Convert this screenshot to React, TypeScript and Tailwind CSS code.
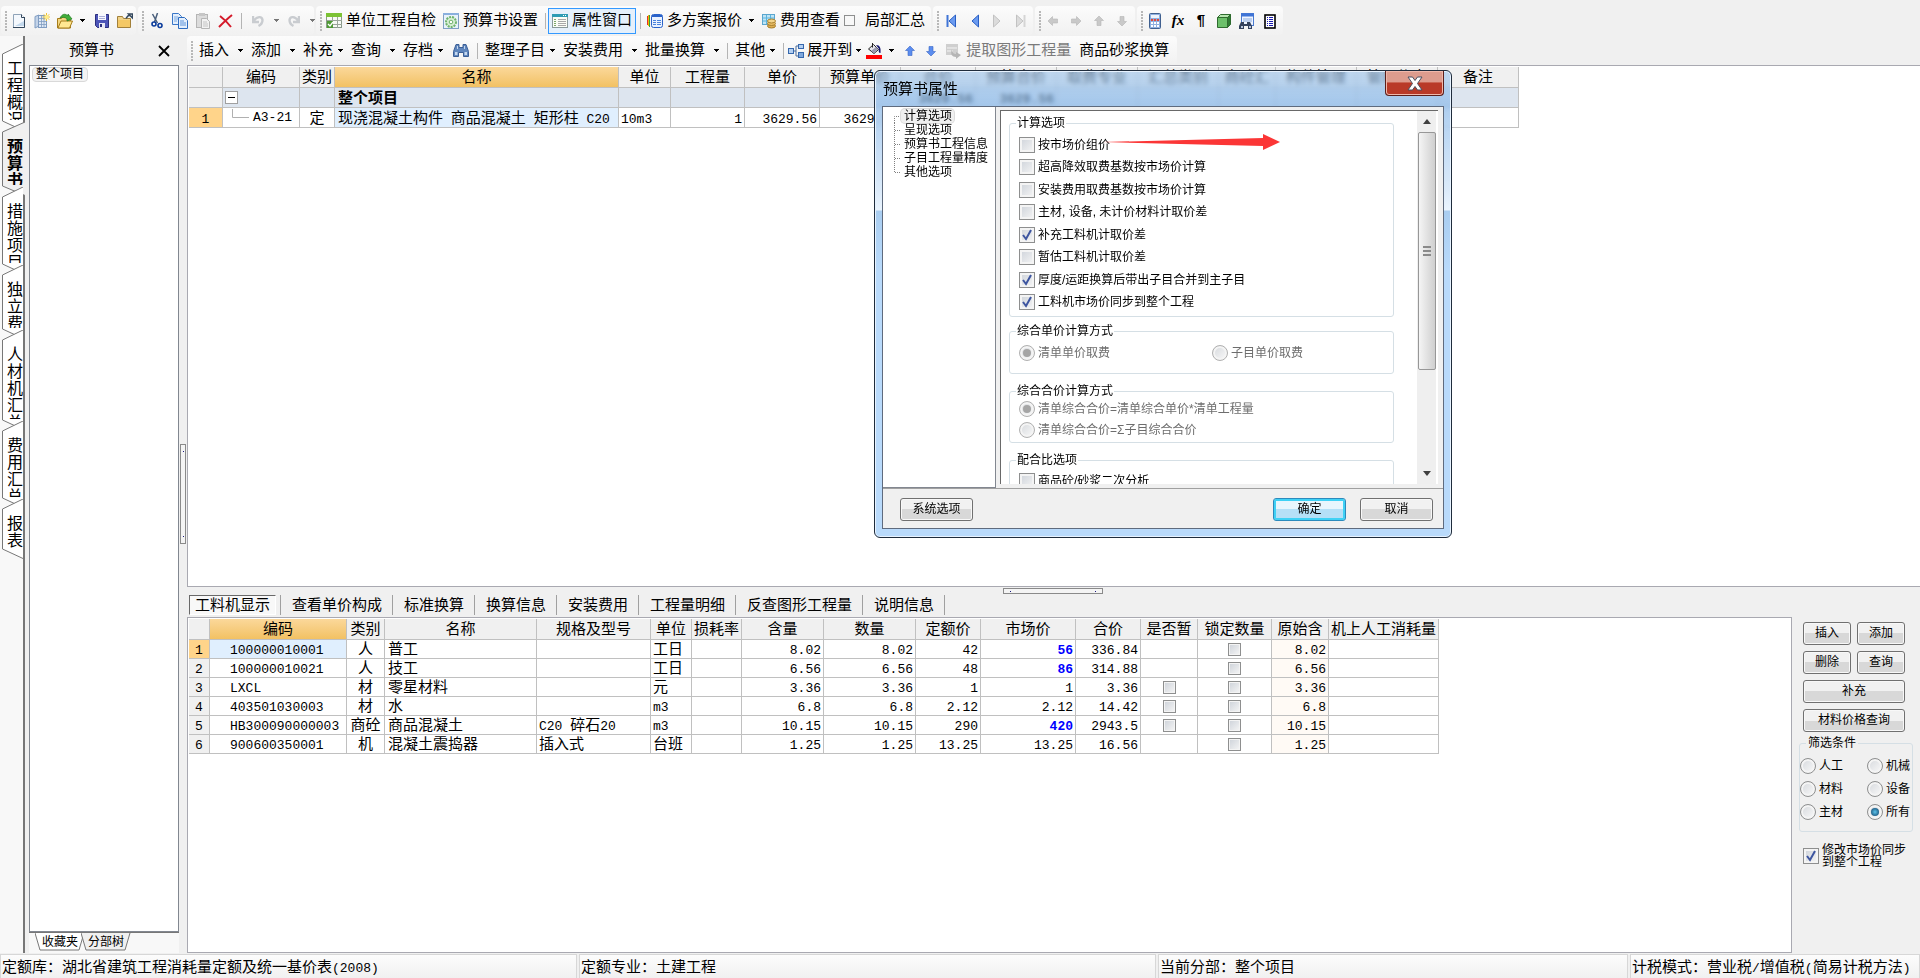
import React, { Fragment, ReactNode } from 'react';

const SANS = "font-['Liberation_Sans','Noto_Sans_CJK_SC',sans-serif]";

/* Chinese runs keep the surrounding size, Latin runs use the narrower monospace face */
function Mixed({ s }: { s: string }) {
  return (
    <>
      {s.split(/([\x20-\x7e]+)/).map((p, i) =>
        i % 2 ? (
          <span key={i} className="whitespace-pre font-['Liberation_Mono',monospace] text-[13px] leading-none">
            {p}
          </span>
        ) : (
          <Fragment key={i}>{p}</Fragment>
        ),
      )}
    </>
  );
}

function Svg({ children, w = 16, h = 16 }: { children: ReactNode; w?: number; h?: number }) {
  return (
    <svg width={w} height={h} viewBox={`0 0 ${w} ${h}`} fill="none" aria-hidden="true" className="shrink-0">
      {children}
    </svg>
  );
}

const Caret = ({ dim = false }: { dim?: boolean }) => (
  <Svg w={7} h={4}>
    <path d="M1 0h5v1h-1v1h-1v1h-1v-1h-1v-1h-1z" fill={dim ? '#777' : '#000'} />
  </Svg>
);

const Grip = () => (
  <Svg w={3} h={20}>
    {[0, 3, 6, 9, 12, 15, 18].map((y) => (
      <rect key={y} x="0" y={y} width="2" height="2" fill="#b8b8b8" />
    ))}
  </Svg>
);

const Sep = () => <span className="block h-4 w-px shrink-0 bg-[#b4b4b4]" />;

const NewDoc = () => (
  <Svg w={12}>
    <path d="M.5 1.5h8l3 3v10h-11z" fill="#f4f8fd" stroke="#8fa3b8" />
    <path d="M2 13h9V8z" fill="#c3d8ec" />
    <path d="M8.5 1.5v3h3" fill="#fff" stroke="#33475c" />
    <path d="M11.5 4v10.500H0" stroke="#33475c" />
  </Svg>
);
const NewGrid = () => (
  <Svg>
    <path d="M1 3.500l4-1.500v11l-4 2z" fill="#c3d3e8" stroke="#7f9cc2" />
    <rect x="4.500" y="2.500" width="8" height="12" fill="#dfe9f6" stroke="#7f9cc2" />
    <path d="M5 5.500h7M5 8.500h7M5 11.500h7M7.500 3v11M10 3v11" stroke="#7f9cc2" strokeWidth=".8" />
    <path d="M12.500 0v8M8.500 4h7.500M9.800 1.300l5.400 5.400M15.200 1.300l-5.400 5.400" stroke="#f2c230" />
    <circle cx="12.500" cy="4" r="2" fill="#ffee8a" />
  </Svg>
);
const OpenFolder = () => (
  <Svg>
    <path d="M.5 5.500h4l1-1.500h5v3h3v8H.5z" fill="#f3d680" stroke="#a67c1a" />
    <path d="M1 15l3-7h11.500l-3 7z" fill="#ffe892" stroke="#a67c1a" />
    <path d="M3 5C5 1 8 0 11 3V1l4 5-5 2V6C8 4 6 4 3 5z" fill="#3fae3a" stroke="#1e7a1c" strokeWidth=".7" />
  </Svg>
);
const Save = () => (
  <Svg w={14}>
    <path d="M.5 1.500h13v13h-11l-2-2z" fill="#4d55b8" stroke="#2b2f7e" />
    <rect x="3" y="1" width="8" height="6" fill="#f7f8ff" />
    <path d="M4 3.500h6M4 5.500h6" stroke="#a9aed8" />
    <rect x="4" y="10" width="6" height="5" fill="#e8e9f5" />
    <rect x="5" y="11" width="2" height="3" fill="#2b2f7e" />
  </Svg>
);
const FolderOut = () => (
  <Svg>
    <path d="M.5 3.500h5l1 2h7v9H.5z" fill="#f0d38a" stroke="#a2803a" />
    <path d="M1 7h12v7H1z" fill="#f4c865" />
    <path d="M9 5.500c1-2 2-3 4-3.500M11.500 1h4v4z" stroke="#33475c" strokeWidth="1.500" />
  </Svg>
);
const Cut = () => (
  <Svg>
    <path d="M3.500 1l5 9M8.500 0L5.500 9" stroke="#4a5f7c" strokeWidth="1.500" />
    <circle cx="5" cy="11" r="2" stroke="#0b3c9c" strokeWidth="1.600" />
    <circle cx="11" cy="12.500" r="2" stroke="#0b3c9c" strokeWidth="1.600" />
  </Svg>
);
const Copy = () => (
  <Svg>
    <path d="M.5 .5h6l3 3v8h-9z" fill="#e4effc" stroke="#3a77c8" />
    <path d="M2 4h4M2 6h5M2 8h3" stroke="#7ba9e3" />
    <path d="M6.500 4.500h6l3 3v8h-9z" fill="#e4effc" stroke="#2e6cc0" />
    <path d="M8 8h4M8 10h6M8 12h6" stroke="#5f94da" />
  </Svg>
);
const Paste = () => (
  <Svg>
    <rect x="1.500" y="1.500" width="11" height="13" fill="#dcdcdc" stroke="#b5b5b5" />
    <rect x="4" y="0" width="6" height="3" fill="#c6c6c6" />
    <path d="M6.500 5.500h5l3 3v7h-8z" fill="#f2f2f2" stroke="#b5b5b5" />
    <path d="M8 9h4M8 11h5M8 13h5" stroke="#c4c4c4" />
  </Svg>
);
const Cross = () => (
  <Svg>
    <path d="M2 3c4 3 8 7 11 11M14 2C9 6 5 10 1 14" stroke="#d41a2a" strokeWidth="2" />
  </Svg>
);
const Undo = () => (
  <Svg w={12}>
    <path d="M1 3v6h6M1.500 8C5 3 10 3 10.500 7c0 3-2 5-4 6" stroke="#c9ccd0" strokeWidth="2.400" />
  </Svg>
);
const Redo = () => (
  <Svg w={12}>
    <path d="M11 3v6H5M10.500 8C7 3 2 3 1.500 7c0 3 2 5 4 6" stroke="#c9ccd0" strokeWidth="2.400" />
  </Svg>
);
const SheetGreen = () => (
  <Svg>
    <rect x=".5" y=".5" width="15" height="14" fill="#f7f9f5" stroke="#8a9a8a" />
    <rect x="0" y="0" width="16" height="4" fill="#7cc234" />
    <path d="M6.500 4v11M11.500 4v11M1 7.500h15M7 11.500h9" stroke="#9aa59a" />
    <rect x="1" y="8" width="6" height="7" fill="#4f9a35" />
    <path d="M2 11l2 2 3-4" stroke="#fff" strokeWidth="1.300" />
  </Svg>
);
const Gear = () => (
  <Svg>
    <rect x=".5" y=".5" width="15" height="15" fill="#e8f2fb" stroke="#7f9fc4" />
    <path d="M0 1h16" stroke="#8ab0de" strokeWidth="2" />
    <circle cx="8" cy="9" r="5" stroke="#6fb36c" strokeWidth="2" strokeDasharray="2 1" fill="#d8efd5" />
    <circle cx="8" cy="9" r="1.800" fill="#fff" stroke="#6fb36c" />
  </Svg>
);
const WindowList = () => (
  <Svg>
    <rect x=".5" y="1.500" width="15" height="13" fill="#fbfdf6" stroke="#8a9a9a" />
    <rect x="0" y="1" width="16" height="3" fill="#2d9cb4" />
    <path d="M11 2.500h1M13 2.500h1" stroke="#fff" />
    <path d="M2 6.500h2M2 8.500h2M2 10.500h2M2 12.500h2" stroke="#7fa86a" />
    <path d="M6 6.500h8M6 8.500h8M6 10.500h8M6 12.500h8" stroke="#a8a8a8" />
  </Svg>
);
const Sheets = () => (
  <Svg>
    <path d="M.5 3v9" stroke="#e2332a" />
    <path d="M1.500 2v11" stroke="#f5b400" />
    <path d="M2.500 2v12" stroke="#2fa53b" />
    <rect x="4.500" y="1.500" width="11" height="13" rx="2" fill="#eaf2ff" stroke="#2a62c9" />
    <path d="M5 3h10" stroke="#2a62c9" strokeWidth="2" />
    <path d="M6 7.500h3M10 7.500h4M6 9.500h3M10 9.500h4M6 11.500h3M10 11.500h4" stroke="#4b82dc" />
  </Svg>
);
const Coins = () => (
  <Svg w={14}>
    <rect x=".5" y="1.500" width="12" height="10" fill="#bfe4f5" stroke="#5aa6cf" />
    <path d="M1 5h11M1 8h11M4.500 2v9M8.500 2v9" stroke="#5ab4de" />
    <ellipse cx="9.500" cy="13" rx="4" ry="2" fill="#dcae52" stroke="#a87f2c" />
    <ellipse cx="9.500" cy="10.500" rx="4" ry="2" fill="#e9bd65" stroke="#a87f2c" />
    <ellipse cx="9.500" cy="8" rx="4" ry="2" fill="#f3d58c" stroke="#a87f2c" />
  </Svg>
);
const Binoculars = () => (
  <Svg>
    <path d="M3 1.500h3v3h4v-3h3l2.500 7v5h-5v-4h-5v4h-5v-5z" fill="#5f86bd" stroke="#3b5f97" />
    <path d="M2 9h2.500v3H2zM11.500 9H14v3h-2.500zM4 3h1v3H4zM11 3h1v3h-1z" fill="#c4d7ef" />
  </Svg>
);
const TreeIcon = () => (
  <Svg>
    <path d="M5 8h3M8 3v10M8 3h3M8 13h3" stroke="#4a6d9c" />
    <rect x=".5" y="5.500" width="5" height="5" fill="#b5d0f1" stroke="#3567ad" />
    <rect x="10.500" y="1.500" width="5" height="4" fill="#b5d0f1" stroke="#3567ad" />
    <rect x="10.500" y="9.500" width="5" height="5" fill="#7fa8dd" stroke="#3567ad" />
  </Svg>
);
const Bucket = () => (
  <Svg>
    <path d="M2.500 6l5-4.500 5 5-4.500 4z" fill="#e6e6ec" stroke="#222" />
    <path d="M5 8l5-4 2 2-4 4z" fill="#9a9ab0" />
    <path d="M6.500 0v4.500" stroke="#222" />
    <path d="M10 2c4 0 5 3 4.500 8-2 0-2-2-1.500-4z" fill="#15156e" />
    <rect x="0" y="12" width="16" height="4" fill="#f00" />
  </Svg>
);
const Extract = () => (
  <Svg>
    <rect x="0" y="1" width="12" height="11" fill="#cfcfcf" />
    <path d="M1 5h10M1 8h6" stroke="#f4f4f4" />
    <path d="M6 6c0 4 2 5 4 5V9l5 3-5 4v-2c-4 0-6-3-4-8z" fill="#b5b5b5" />
  </Svg>
);
const BlockArrow = ({ dir, color = '#c9c9c9' }: { dir: number; color?: string }) => (
  <Svg w={10} h={10}>
    <path
      d="M5 0l4.500 4.500H7V9.500H3V4.500H.5z"
      fill={color}
      stroke={color === '#c9c9c9' ? '#b5b5b5' : '#3a66c4'}
      strokeWidth=".6"
      transform={`rotate(${dir} 5 5)`}
    />
  </Svg>
);
const Nav = ({ flip = false, bar = false, dim = false }: { flip?: boolean; bar?: boolean; dim?: boolean }) => (
  <Svg w={11} h={14}>
    <g transform={flip ? 'translate(11 0) scale(-1 1)' : undefined}>
      {bar && <rect x=".5" y="1" width="2" height="12" fill={dim ? '#d5d5d5' : '#3f74d6'} />}
      <path d="M9.500 1v12L3 7z" fill={dim ? '#dcdcdc' : '#6b9bf0'} stroke={dim ? '#c2c2c2' : '#2a5fc4'} />
    </g>
  </Svg>
);
const Calc = () => (
  <Svg w={12}>
    <rect x=".5" y=".5" width="11" height="15" rx="1" fill="#8fb0e0" stroke="#40608f" />
    <rect x="2" y="2" width="8" height="3" fill="#eef4fc" />
    {[7, 10, 13].map((y) => [2, 5, 8].map((x) => <rect key={`${x}-${y}`} x={x} y={y - 1} width="2" height="2" fill={y === 7 ? '#e0483a' : '#fff'} />))}
  </Svg>
);
const Cube = () => (
  <Svg w={14}>
    <path d="M.5 4.500l3-3h10l-3 3z" fill="#b5e6ae" stroke="#2f6b2f" />
    <path d="M10.500 4.500l3-3v10l-3 3z" fill="#2e7d32" stroke="#2f6b2f" />
    <path d="M.5 4.500h10v10H.5z" fill="#6cc06a" stroke="#2f6b2f" />
  </Svg>
);
const FindSheet = () => (
  <Svg>
    <rect x="2.500" y=".5" width="12" height="12" fill="#eef4ff" stroke="#4a7bd0" />
    <path d="M2 2h13" stroke="#3f74d6" strokeWidth="3" />
    <path d="M4 6h9M4 8h9" stroke="#8aabdf" />
    <path d="M2 9h3v2h3V9h3l2 4v3H9v-3H5v3H0v-3z" fill="#33415c" />
    <path d="M2 13h2v2H2zM10 13h2v2h-2z" fill="#b9c8e0" />
  </Svg>
);
const ListIcon = () => (
  <Svg w={12}>
    <rect x="1" y="2" width="10" height="13" fill="#fff" stroke="#000" strokeWidth="1.600" />
    <path d="M3 4.500h1M5 4.500h4M3 6.500h1M5 6.500h4M3 8.500h1M5 8.500h4M3 10.500h1M5 10.500h4M3 12.500h1M5 12.500h4" stroke="#1a1ab0" />
  </Svg>
);

function Group({ children, className = '' }: { children: ReactNode; className?: string }) {
  return (
    <div className={`flex h-[29px] shrink-0 items-center rounded-sm bg-linear-to-b from-[#fcfcfc] to-[#f1f1f1] pl-1 ${className}`}>
      <Grip />
      {children}
    </div>
  );
}

function Ico({ label, children, className = 'w-6' }: { label: string; children: ReactNode; className?: string }) {
  return (
    <button type="button" aria-label={label} className={`flex h-6 shrink-0 items-center justify-center ${className}`}>
      {children}
    </button>
  );
}

function Drop({ label, tight = false }: { label: string; tight?: boolean }) {
  return (
    <button type="button" className="flex shrink-0 items-center pr-[7px]">
      {label}
      <span className={tight ? 'ml-1' : 'ml-2'}>
        <Caret />
      </span>
    </button>
  );
}

function TopBar() {
  return (
    <header className="flex h-9 items-start gap-0.5 pt-1.5 pl-px text-[15px]">
      <Group className="w-[135px]">
        <Ico label="新建" className="w-[22px]"><NewDoc /></Ico>
        <Ico label="新建表"><NewGrid /></Ico>
        <Ico label="打开" className="w-[22px]"><OpenFolder /></Ico>
        <Ico label="打开列表" className="w-3"><Caret /></Ico>
        <Ico label="保存" className="w-7"><Save /></Ico>
        <Ico label="关闭工程" className="w-[18px]"><FolderOut /></Ico>
      </Group>
      <Group className="w-[176px]">
        <Ico label="剪切"><Cut /></Ico>
        <Ico label="复制" className="w-[22px]"><Copy /></Ico>
        <Ico label="粘贴"><Paste /></Ico>
        <Ico label="删除" className="w-[22px]"><Cross /></Ico>
        <span className="px-1"><Sep /></span>
        <Ico label="撤销"><Undo /></Ico>
        <Ico label="撤销列表" className="w-3"><Caret dim /></Ico>
        <Ico label="重做"><Redo /></Ico>
        <Ico label="重做列表" className="w-3"><Caret dim /></Ico>
      </Group>
      <Group className="w-[615px]">
        <button type="button" className="ml-[3px] flex shrink-0 items-center gap-1 whitespace-nowrap"><SheetGreen />单位工程自检</button>
        <button type="button" className="ml-[7px] flex shrink-0 items-center gap-1 whitespace-nowrap"><Gear />预算书设置</button>
        <span className="ml-[7px]"><Sep /></span>
        <button type="button" className="ml-0.5 flex h-[26px] shrink-0 items-center gap-1 border border-[#3399ff] bg-[#e5f0fb] px-[3px] whitespace-nowrap"><WindowList />属性窗口</button>
        <span className="ml-1"><Sep /></span>
        <button type="button" className="ml-1.5 flex shrink-0 items-center gap-1 whitespace-nowrap"><Sheets />多方案报价<span className="ml-0.5"><Caret /></span></button>
        <button type="button" className="ml-[7px] flex shrink-0 items-center gap-1 whitespace-nowrap"><Coins />费用查看</button>
        <label className="ml-1 flex shrink-0 items-center gap-2.5 whitespace-nowrap">
          <input type="checkbox" className="h-[11px] w-[11px] appearance-none border border-[#8e8f8f] bg-[#f8f8f8]" />
          局部汇总
        </label>
      </Group>
      <Group className="w-[100px]">
        <div className="flex gap-3 pl-1.5">
          <button type="button" aria-label="首条"><Nav bar /></button>
          <button type="button" aria-label="上一条"><Nav /></button>
          <button type="button" aria-label="下一条"><Nav flip dim /></button>
          <button type="button" aria-label="末条"><Nav flip bar dim /></button>
        </div>
      </Group>
      <Group className="w-[100px]">
        <div className="flex gap-[13px] pl-1.5">
          <button type="button" aria-label="左移"><BlockArrow dir={-90} /></button>
          <button type="button" aria-label="右移"><BlockArrow dir={90} /></button>
          <button type="button" aria-label="上移"><BlockArrow dir={0} /></button>
          <button type="button" aria-label="下移"><BlockArrow dir={180} /></button>
        </div>
      </Group>
      <Group className="w-[146px]">
        <Ico label="计算器" className="w-[22px]"><Calc /></Ico>
        <Ico label="函数"><i className="font-['Liberation_Serif',serif] text-[15px] font-bold">fx</i></Ico>
        <Ico label="段落" className="w-[22px]"><span className="font-['Liberation_Sans',sans-serif] text-[15px] font-bold">¶</span></Ico>
        <Ico label="三维"><Cube /></Ico>
        <Ico label="查找表" className="w-[22px]"><FindSheet /></Ico>
        <Ico label="清单"><ListIcon /></Ico>
      </Group>
    </header>
  );
}

function EditBar() {
  return (
    <div className="flex h-[29px] shrink-0 items-start">
      <Group className="text-[15px] whitespace-nowrap">
        <span className="w-[5px]" />
        <Drop label="插入" />
        <Drop label="添加" />
        <Drop label="补充" tight />
        <Drop label="查询" />
        <Drop label="存档" tight />
        <Ico label="查找" className="w-5"><Binoculars /></Ico>
        <span className="pr-[7px] pl-1.5"><Sep /></span>
        <Drop label="整理子目" tight />
        <Drop label="安装费用" />
        <Drop label="批量换算" />
        <span className="pr-[7px]"><Sep /></span>
        <Drop label="其他" tight />
        <span className="pr-1"><Sep /></span>
        <button type="button" className="flex items-center gap-[3px] pr-1"><TreeIcon />展开到<Caret /></button>
        <Ico label="填充颜色" className="w-4"><Bucket /></Ico>
        <Ico label="颜色列表" className="w-[18px]"><Caret /></Ico>
        <Ico label="上移" className="w-5"><BlockArrow dir={0} color="#5b8def" /></Ico>
        <Ico label="下移" className="w-[22px]"><BlockArrow dir={180} color="#5b8def" /></Ico>
        <button type="button" className="ml-1 flex items-center gap-1 text-[#7a7a7a]"><Extract />提取图形工程量</button>
        <button type="button" className="px-2">商品砂浆换算</button>
      </Group>
    </div>
  );
}

const TABS: { name: string; h: number; on?: boolean }[] = [
  { name: '工程概况', h: 67 },
  { name: '预算书', h: 54, on: true },
  { name: '措施项目', h: 67 },
  { name: '独立费', h: 54 },
  { name: '人材机汇总', h: 80 },
  { name: '费用汇总', h: 67 },
  { name: '报表', h: 40 },
];

function SideTabs() {
  return (
    <nav className="flex w-[25px] shrink-0 flex-col gap-[11px] border-r-2 border-[#777] bg-[#f8f8f8] pt-[18px]">
      {TABS.map((t) => (
        <button key={t.name} type="button" className="relative w-full shrink-0 pt-[5px] pl-[7px]" style={{ height: t.h }}>
          <svg width={t.on ? 25 : 23} height={t.h + 20} className="absolute top-[-10px] left-0" aria-hidden="true">
            <path
              d={`M${t.on ? 25 : 23} 0L2.500 10V${t.h + 10}L${t.on ? 25 : 23} ${t.h + 19.5}`}
              fill={t.on ? '#f0f0f0' : '#fff'}
              stroke="#777"
            />
          </svg>
          <span
            className={`relative block overflow-hidden text-left text-[16px] leading-[17px] ${t.on ? 'font-bold' : ''}`}
            style={{ maxHeight: t.h - 7 }}
          >
            {t.name.split('').map((c, i) => (
              <span key={i} className="block">{c}</span>
            ))}
          </span>
        </button>
      ))}
    </nav>
  );
}

function ProjectPanel() {
  return (
    <aside className="flex w-[150px] shrink-0 flex-col">
      <div className="flex h-[29px] items-center justify-between pr-[9px] pl-10 text-[15px]">
        预算书
        <button type="button" aria-label="关闭面板">
          <Svg w={12} h={12}>
            <path d="M1 1l10 10M11 1L1 11" stroke="#000" strokeWidth="1.800" />
          </Svg>
        </button>
      </div>
      <div className="flex flex-1 items-start border border-[#828790] bg-white p-px pl-0.5">
        <a href="#project" className="rounded-sm border border-[#d9d9d9] bg-[#f3f3f3] px-[3px] text-[12px] leading-[13px]">
          整个项目
        </a>
      </div>
      <div className="flex h-[21px] border-t border-[#777] bg-[#f8f8f8] pl-2 text-[12px] leading-[17px]">
        {['收藏夹', '分部树'].map((t, i) => (
          <button key={t} type="button" className="relative h-[18px] w-[46px] text-center">
            <svg width="50" height="18" className="absolute top-0 left-[-2px]" aria-hidden="true">
              <path d="M0 0L5 17H44L49 0" fill={i ? '#f0f0f0' : '#fff'} stroke="#777" />
            </svg>
            <span className="relative">{t}</span>
          </button>
        ))}
      </div>
    </aside>
  );
}

const CELL = 'overflow-hidden border-r border-b border-[#c0c0c0] whitespace-nowrap';

const TOP_COLS: [string, number][] = [
  ['', 34], ['编码', 77], ['类别', 35], ['名称', 284], ['单位', 52], ['工程量', 74], ['单价', 75], ['预算单价', 81],
  ['合价', 75], ['预算合价', 81], ['取费专业', 81], ['汇总类别', 81], ['商砼汇', 57], ['构件管理', 81], ['管理信息', 81], ['备注', 81],
];

function Cols({ cols }: { cols: [string, number][] }) {
  return (
    <colgroup>
      {cols.map((c, i) => (
        <col key={i} style={{ width: c[1] }} />
      ))}
    </colgroup>
  );
}

const total = (cols: [string, number][]) => cols.reduce((a, c) => a + c[1], 0);

function ItemTable() {
  return (
    <table className="table-fixed border-separate border-spacing-0 text-[15px] leading-4" style={{ width: total(TOP_COLS) }}>
      <Cols cols={TOP_COLS} />
      <thead>
        <tr className="h-[21px]">
          {TOP_COLS.map((c, i) => (
            <th key={i} className={`${CELL} p-0 text-center font-normal ${i === 3 ? 'bg-linear-to-b from-[#fbd89a] to-[#f2c162]' : 'bg-[#f0f0f0]'}`}>
              {c[0]}
            </th>
          ))}
        </tr>
      </thead>
      <tbody>
        <tr className="h-5 bg-[#dde5ef]">
          {TOP_COLS.map((_, i) => (
            <td key={i} className={`${CELL} p-0 ${i === 0 ? 'bg-[#f0f0f0]' : ''} ${i === 3 ? 'pl-[3px] font-bold' : ''} ${i === 8 || i === 9 ? 'pr-0.5 text-right font-bold' : ''}`}>
              {i === 1 && (
                <span className="ml-0.5 flex h-[13px] w-[13px] items-center justify-center border border-[#a0a0a0] bg-white">
                  <span className="h-px w-[7px] bg-black" />
                </span>
              )}
              {i === 3 && '整个项目'}
              {(i === 8 || i === 9) && <Mixed s="3629.56" />}
            </td>
          ))}
        </tr>
        <tr className="h-5 bg-white">
          {['1', 'A3-21', '定', '现浇混凝土构件 商品混凝土 矩形柱 C20', '10m3', '1', '3629.56', '3629.56', '', '', '', '', '', '', '', ''].map((v, i) => (
            <td
              key={i}
              className={`${CELL} p-0 ${i === 0 ? 'bg-[#ffd48a] text-center' : ''} ${i === 1 ? 'pr-[7px] text-right' : ''} ${i === 2 ? 'text-center' : ''} ${i === 3 ? 'bg-[#e0effe] pl-[3px]' : ''} ${i === 4 ? 'pl-0.5' : ''} ${i > 4 ? 'pr-0.5 text-right' : ''}`}
            >
              {i === 1 ? (
                <span className="flex items-center justify-end gap-1">
                  <Svg w={17} h={18}>
                    <path d="M.5 0V8.500H17" stroke="#b0b0b0" />
                  </Svg>
                  <Mixed s={v} />
                </span>
              ) : (
                <Mixed s={v} />
              )}
            </td>
          ))}
        </tr>
      </tbody>
    </table>
  );
}

const LOW_COLS: [string, number][] = [
  ['', 21], ['编码', 137], ['类别', 38], ['名称', 152], ['规格及型号', 114], ['单位', 41], ['损耗率', 50], ['含量', 82], ['数量', 92],
  ['定额价', 65], ['市场价', 95], ['合价', 65], ['是否暂', 57], ['锁定数量', 74], ['原始含', 57], ['机上人工消耗量', 110],
];

const ROWS: string[][] = [
  ['100000010001', '人', '普工', '', '工日', '', '8.02', '8.02', '42', '56', '336.84', '', '8.02'],
  ['100000010021', '人', '技工', '', '工日', '', '6.56', '6.56', '48', '86', '314.88', '', '6.56'],
  ['LXCL', '材', '零星材料', '', '元', '', '3.36', '3.36', '1', '1', '3.36', 'y', '3.36'],
  ['403501030003', '材', '水', '', 'm3', '', '6.8', '6.8', '2.12', '2.12', '14.42', 'y', '6.8'],
  ['HB300090000003', '商砼', '商品混凝土', 'C20 碎石20', 'm3', '', '10.15', '10.15', '290', '420', '2943.5', 'y', '10.15'],
  ['900600350001', '机', '混凝土震捣器', '插入式', '台班', '', '1.25', '1.25', '13.25', '13.25', '16.56', '', '1.25'],
];

const MiniBox = ({ label }: { label: string }) => (
  <input
    type="checkbox"
    aria-label={label}
    className="mx-auto block h-[13px] w-[13px] appearance-none border border-[#8e8f8f] bg-linear-to-br from-[#cdd2d9] to-[#f6f6f6] shadow-[inset_0_0_0_1px_#f4f4f4]"
  />
);

function ResourceTable() {
  return (
    <table className="table-fixed border-separate border-spacing-0 text-[15px] leading-4" style={{ width: total(LOW_COLS) }}>
      <Cols cols={LOW_COLS} />
      <thead>
        <tr className="h-[21px]">
          {LOW_COLS.map((c, i) => (
            <th key={i} className={`${CELL} p-0 text-center font-normal ${i === 1 ? 'bg-linear-to-b from-[#fbd89a] to-[#f2c162]' : 'bg-[#f0f0f0]'}`}>
              {c[0]}
            </th>
          ))}
        </tr>
      </thead>
      <tbody>
        {ROWS.map((r, n) => {
          const num = `${CELL} p-0 pr-0.5 text-right`;
          const hot = /^(56|86|420)$/.test(r[9]);
          return (
            <tr key={n} className="h-[19px]">
              <td className={`${CELL} p-0 text-center ${n === 0 ? 'bg-[#ffd48a]' : 'bg-[#f0f0f0]'}`}><Mixed s={String(n + 1)} /></td>
              <td className={`${CELL} p-0 pl-5 ${n === 0 ? 'bg-[#e0effe]' : ''}`}><Mixed s={r[0]} /></td>
              <td className={`${CELL} p-0 text-center`}>{r[1]}</td>
              <td className={`${CELL} p-0 pl-[3px]`}>{r[2]}</td>
              <td className={`${CELL} p-0 pl-0.5`}><Mixed s={r[3]} /></td>
              <td className={`${CELL} p-0 pl-0.5`}><Mixed s={r[4]} /></td>
              <td className={num} />
              <td className={num}><Mixed s={r[6]} /></td>
              <td className={num}><Mixed s={r[7]} /></td>
              <td className={num}><Mixed s={r[8]} /></td>
              <td className={`${num} ${hot ? 'font-bold text-[#0000ff]' : ''}`}><Mixed s={r[9]} /></td>
              <td className={num}><Mixed s={r[10]} /></td>
              <td className={`${CELL} p-0`}>{r[11] && <MiniBox label={`是否暂 ${n + 1}`} />}</td>
              <td className={`${CELL} p-0`}><MiniBox label={`锁定数量 ${n + 1}`} /></td>
              <td className={`${num} bg-[#fffaf5]`}><Mixed s={r[12]} /></td>
              <td className={num} />
            </tr>
          );
        })}
      </tbody>
    </table>
  );
}

function Check({ children, checked = false }: { children: ReactNode; checked?: boolean }) {
  return (
    <label className="flex min-h-4 items-center gap-[3px] text-[12px] leading-3 whitespace-nowrap">
      <span className="relative h-4 w-4 shrink-0">
        <input
          type="checkbox"
          defaultChecked={checked}
          className="peer block h-4 w-4 appearance-none border border-[#8e8f8f] bg-linear-to-br from-[#cdd2d9] to-[#f6f6f6] shadow-[inset_0_0_0_2px_#f4f4f4]"
        />
        <svg width="16" height="16" aria-hidden="true" className="pointer-events-none absolute inset-0 hidden peer-checked:block">
          <path d="M4 8l3 4 5-9" fill="none" stroke="#3d55a0" strokeWidth="2" />
        </svg>
      </span>
      <span>{children}</span>
    </label>
  );
}

function Radio({ children, name, checked = false, disabled = false }: { children: ReactNode; name: string; checked?: boolean; disabled?: boolean }) {
  return (
    <label className={`flex h-4 items-center gap-[3px] text-[12px] leading-3 whitespace-nowrap ${disabled ? 'text-[#6d6d6d]' : ''}`}>
      <span className="relative h-4 w-4 shrink-0">
        <input
          type="radio"
          name={name}
          defaultChecked={checked}
          disabled={disabled}
          className="peer block h-4 w-4 appearance-none rounded-full border border-[#8e8f8f] bg-linear-to-br from-[#d5d8dc] to-[#fafafa] shadow-[inset_0_0_0_2px_#f4f4f4] disabled:border-[#b0b0b0]"
        />
        <span
          className={`pointer-events-none absolute inset-1 hidden rounded-full peer-checked:block ${disabled ? 'bg-[#a5a5a5]' : 'bg-radial from-[#5cc4ec] to-[#0d3f66]'}`}
        />
      </span>
      {children}
    </label>
  );
}

function Btn({ children, className = '', primary = false }: { children: ReactNode; className?: string; primary?: boolean }) {
  return (
    <button
      type="button"
      className={`h-[23px] rounded-[3px] border text-[12px] leading-[21px] ${
        primary
          ? 'border-[#2c8bbd] bg-linear-to-b from-[#e8f6fd] from-50% to-[#b5e0f7] to-50% shadow-[inset_0_0_0_2px_#3fd1f5]'
          : 'border-[#707070] bg-linear-to-b from-[#f1f1f1] from-50% to-[#d8d8d8] to-50% shadow-[inset_0_0_0_1px_#f8f8f8]'
      } ${className}`}
    >
      {children}
    </button>
  );
}

function SidePanel() {
  return (
    <aside className="w-32 shrink-0 px-[7px] pt-[5px]">
      <div className="flex flex-col gap-1.5 px-1 pr-2">
        <div className="flex gap-1.5">
          <Btn className="flex-1">插入</Btn>
          <Btn className="flex-1">添加</Btn>
        </div>
        <div className="flex gap-1.5">
          <Btn className="flex-1">删除</Btn>
          <Btn className="flex-1">查询</Btn>
        </div>
        <Btn>补充</Btn>
        <Btn>材料价格查询</Btn>
      </div>
      <fieldset className="mt-[5px] h-[95px] rounded-[3px] border border-[#d5dfe5]">
        <legend className="ml-1.5 px-0.5 text-[12px] leading-3">筛选条件</legend>
        <div className="grid grid-cols-[67px_auto] gap-y-[7px] pt-[9px]">
          <Radio name="kind">人工</Radio>
          <Radio name="kind">机械</Radio>
          <Radio name="kind">材料</Radio>
          <Radio name="kind">设备</Radio>
          <Radio name="kind">主材</Radio>
          <Radio name="kind" checked>所有</Radio>
        </div>
      </fieldset>
      <div className="mt-3 pl-1">
        <Check checked>
          修改市场价同步
          <br />
          到整个工程
        </Check>
      </div>
    </aside>
  );
}

const Handle = ({ vertical = false }: { vertical?: boolean }) => (
  <span
    className={`flex items-center justify-between border border-[#8a8a8a] bg-[#f4f4f4] ${vertical ? 'h-[100px] w-1.5 flex-col py-1.5' : 'h-1.5 w-[100px] px-1.5'}`}
  >
    <span className="h-px w-px bg-[#1a1a80]" />
    <span className="h-px w-px bg-[#1a1a80]" />
  </span>
);

const FS = 'rounded-[3px] border border-[#d5dfe5] pl-[9px]';
const LG = 'ml-[-3px] px-px text-[12px] leading-3';

function Dialog() {
  return (
    <section
      role="dialog"
      aria-label="预算书属性"
      className="absolute top-[70px] left-[874px] flex h-[468px] w-[578px] flex-col rounded-[6px] border border-[#1f2c3c] bg-[linear-gradient(180deg,rgba(160,198,236,0.62)_0px,rgba(140,186,234,0.7)_36px,#dcebfa_120px,#eaf4fe_139px,#a9cdf0_140px,#b9dafb_200px,#b9dafb_100%)] px-[7px] pb-2 shadow-[inset_0_0_0_1px_#e8f3ff] backdrop-blur-[2px]"
    >
      <div className="flex h-[35px] shrink-0 items-start justify-between">
        <h2 className="pt-2 pl-px text-[15px] leading-5">预算书属性</h2>
        <button
          type="button"
          aria-label="关闭"
          className="flex h-[25px] w-[59px] items-center justify-center rounded-b-[4px] border border-t-0 border-[#5c1f1a] bg-linear-to-b from-[#dd9c8e] from-45% to-[#b93a28] to-50% shadow-[inset_0_0_0_1px_#f0b8ab]"
        >
          <Svg w={16} h={15}>
            <path d="M1 1h4.500L8 4.500 10.500 1H15l-4.500 6.500L15 14h-4.500L8 10.500 5.500 14H1l4.500-6.500z" fill="#fff" stroke="#4a4f60" />
          </Svg>
        </button>
      </div>
      <div className="flex flex-1 flex-col border border-[#5f6b7e] bg-[#f0f0f0]">
        <div className="flex h-[382px] border-b border-[#a0a0a0]">
          <ul className="w-[113px] shrink-0 border-r border-b border-[#828790] bg-white pt-0.5 text-[12px] leading-[14px]">
            {['计算选项', '呈现选项', '预算书工程信息', '子目工程量精度', '其他选项'].map((t, i) => (
              <li key={t} className="flex items-center pl-[11px] whitespace-nowrap">
                <Svg w={7} h={14}>
                  <path d={i === 4 ? 'M.5 0V7.500H7' : i === 0 ? 'M.5 14V7.500H7' : 'M.5 0V14M1 7.500H7'} stroke="#808080" strokeDasharray="1 1" />
                </Svg>
                <a href="#option" className={`rounded-sm pr-0.5 pl-[3px] ${i === 0 ? 'bg-[#f0f0f0] shadow-[0_0_0_1px_#dcdcdc]' : ''}`}>
                  {t}
                </a>
              </li>
            ))}
          </ul>
          <div className="mt-[3px] mr-[5px] mb-1 ml-1 flex flex-1 overflow-hidden border-t border-l border-[#696969] bg-white">
            <div className="flex-1 overflow-hidden pt-1.5 pr-[23px] pl-2">
              <fieldset className={`${FS} h-[200px]`}>
                <legend className={LG}>计算选项</legend>
                <div className="flex h-[181px] flex-col justify-between pt-2">
                  <Check>按市场价组价</Check>
                  <Check>超高降效取费基数按市场价计算</Check>
                  <Check>安装费用取费基数按市场价计算</Check>
                  <Check>主材, 设备, 未计价材料计取价差</Check>
                  <Check checked>补充工料机计取价差</Check>
                  <Check>暂估工料机计取价差</Check>
                  <Check checked>厚度/运距换算后带出子目合并到主子目</Check>
                  <Check checked>工料机市场价同步到整个工程</Check>
                </div>
              </fieldset>
              <fieldset className={`${FS} mt-2 h-[49px]`}>
                <legend className={LG}>综合单价计算方式</legend>
                <div className="grid grid-cols-[193px_auto] pt-2">
                  <Radio name="unit" checked disabled>清单单价取费</Radio>
                  <Radio name="unit" disabled>子目单价取费</Radio>
                </div>
              </fieldset>
              <fieldset className={`${FS} mt-[11px] h-[58px]`}>
                <legend className={LG}>综合合价计算方式</legend>
                <div className="flex flex-col gap-[5px] pt-1">
                  <Radio name="sum" checked disabled>清单综合合价=清单综合单价*清单工程量</Radio>
                  <Radio name="sum" disabled>清单综合合价=Σ子目综合合价</Radio>
                </div>
              </fieldset>
              <fieldset className={`${FS} mt-[11px] h-[58px]`}>
                <legend className={LG}>配合比选项</legend>
                <div className="pt-[7px]">
                  <Check>商品砼/砂浆二次分析</Check>
                </div>
              </fieldset>
            </div>
            <div className="mr-0.5 flex w-[19px] shrink-0 flex-col items-center bg-[#efefef]">
              <span className="flex h-[21px] items-center">
                <Svg w={8} h={5}><path d="M0 5L4 0l4 5z" fill="#404040" /></Svg>
              </span>
              <span className="flex h-[238px] w-[18px] flex-col items-center justify-center gap-0.5 rounded-[2px] border border-[#979797] bg-linear-to-r from-[#f5f5f5] to-[#cfcfcf]">
                <span className="h-0.5 w-2 bg-[#8a8a8a]" />
                <span className="h-0.5 w-2 bg-[#8a8a8a]" />
                <span className="h-0.5 w-2 bg-[#8a8a8a]" />
              </span>
              <span className="mt-auto flex h-[21px] items-center">
                <Svg w={8} h={5}><path d="M0 0h8L4 5z" fill="#404040" /></Svg>
              </span>
            </div>
          </div>
        </div>
        <div className="flex items-center gap-3.5 pt-[9px] pr-2.5 pl-[17px]">
          <Btn className="mr-auto w-[73px]">系统选项</Btn>
          <Btn className="w-[73px]" primary>确定</Btn>
          <Btn className="w-[73px]">取消</Btn>
        </div>
      </div>
      <svg width="178" height="18" viewBox="0 0 178 18" aria-hidden="true" className="pointer-events-none absolute top-[62px] left-[228px]">
        <path d="M0 9L160 5V1l17 8-17 8v-4z" fill="#fb3636" />
      </svg>
    </section>
  );
}

const DETAIL_TABS = ['查看单价构成', '标准换算', '换算信息', '安装费用', '工程量明细', '反查图形工程量', '说明信息'];

export default function App() {
  return (
    <div className={`relative flex min-h-screen flex-col bg-[#f0f0f0] text-black ${SANS}`}>
      <TopBar />
      <div className="flex flex-1">
        <SideTabs />
        <div className="w-1 shrink-0" />
        <ProjectPanel />
        <div className="flex w-2 shrink-0 flex-col items-center justify-center pb-px">
          <Handle vertical />
        </div>
        <main className="flex min-w-0 flex-1 flex-col">
          <EditBar />
          <div className="grid flex-1 grid-rows-[522fr_30px_336fr]">
            <div className="min-w-0 overflow-hidden border-y border-l border-[#a9a9b1] bg-white p-px">
              <ItemTable />
            </div>
            <div className="relative flex items-start pt-2 pl-0.5 text-[15px] leading-5 whitespace-nowrap">
              <div className="absolute inset-x-0 top-px flex justify-center pr-px">
                <Handle />
              </div>
              <button type="button" className="mr-1 h-5 w-[87px] border border-t-[#696969] border-r-white border-b-white border-l-[#696969] bg-[#f8f8f8] leading-[18px]">
                工料机显示
              </button>
              {DETAIL_TABS.map((t) => (
                <button key={t} type="button" className="border-l border-[#a0a0a0] pr-2.5 pl-[11px]">
                  {t}
                </button>
              ))}
              <span className="h-5 w-px bg-[#a0a0a0]" />
            </div>
            <div className="flex min-w-0">
              <div className="min-w-0 flex-1 overflow-hidden border border-[#a9a9b1] bg-white p-px">
                <ResourceTable />
              </div>
              <SidePanel />
            </div>
          </div>
        </main>
      </div>
      <footer className="mt-px grid h-6 grid-cols-[577fr_577fr_470fr_290fr] gap-0.5 text-[15px] leading-[23px] whitespace-nowrap">
        {['定额库：湖北省建筑工程消耗量定额及统一基价表(2008)', '定额专业：土建工程', '当前分部：整个项目', '计税模式：营业税/增值税(简易计税方法)'].map((t) => (
          <div key={t} className="border border-b-0 border-[#d7d7d7] bg-linear-to-b from-[#fcfcfc] to-[#f1f1f1] pl-px">
            <Mixed s={t} />
          </div>
        ))}
      </footer>
      <Dialog />
    </div>
  );
}
